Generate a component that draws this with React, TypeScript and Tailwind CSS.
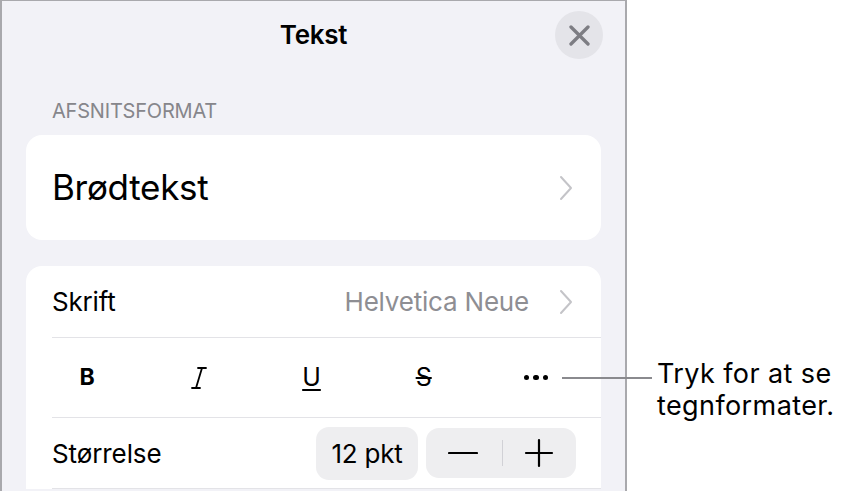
const font = { fontFamily: 'Inter, "Noto Sans", sans-serif' }

function Chevron() {
  return (
    <svg width="14" height="26" viewBox="0 0 14 26" fill="none" stroke="#c4c4c8" strokeWidth="2" strokeLinecap="round" strokeLinejoin="round">
      <polyline points="2,2 12,13 2,24" />
    </svg>
  )
}

function Line({ d }: { d: string }) {
  return (
    <svg width="30" height="30" viewBox="0 0 30 30" fill="none" stroke="black" strokeWidth="2.2" strokeLinecap="round">
      <path d={d} />
    </svg>
  )
}

function Sep() {
  return <div className="ml-[26px] h-px bg-[#e3e3e7]" />
}

export default function App() {
  return (
    <div className="relative flex h-[491px] w-[846px] overflow-hidden bg-white text-black" style={font}>
      <div className="flex h-[520px] w-[627px] flex-col border-l-2 border-r-2 border-t border-[#a9a9ad] bg-[#f2f2f7]">
        <header className="grid grid-cols-[1fr_auto_1fr] items-center py-[10px]">
          <div />
          <h1 className="text-[26px] font-semibold leading-[32px] tracking-[-0.3px]">Tekst</h1>
          <button className="mr-[22px] flex h-12 w-12 items-center justify-center justify-self-end rounded-full bg-[#e4e4e9]">
            <svg width="21" height="21" viewBox="0 0 21 21" fill="none" stroke="#7d7d83" strokeWidth="3.3" strokeLinecap="round">
              <path d="M2 2L19 19M19 2L2 19" />
            </svg>
          </button>
        </header>

        <div className="mt-[30px] px-[50px] text-[20px] leading-[24px] tracking-[-0.2px] text-[#86868b]">AFSNITSFORMAT</div>

        <div className="mx-[24px] mt-[12px] flex h-[105px] items-center justify-between rounded-[16px] bg-white pl-[26px] pr-[28px]">
          <span className="text-[35px] tracking-[-0.3px]">Brødtekst</span>
          <Chevron />
        </div>

        <div className="mx-[24px] mt-[26px] flex flex-col rounded-t-[16px] bg-white">
          <div className="flex h-[71px] items-center justify-between pl-[26px] pr-[28px]">
            <span className="text-[26px] tracking-[-0.2px]">Skrift</span>
            <div className="flex items-center gap-[30px]">
              <span className="text-[26px] tracking-[-0.2px] text-[#8e8e93]">Helvetica Neue</span>
              <Chevron />
            </div>
          </div>
          <Sep />
          <div className="grid h-[79px] grid-cols-5 items-center pl-[5px] pr-[9px]">
            <span className="text-center text-[23px] font-bold">B</span>
            <span className="flex justify-center">
              <svg width="16" height="24" viewBox="0 0 16 24" fill="none" stroke="black" strokeWidth="1.8" strokeLinecap="round">
                <line x1="7" y1="2" x2="15" y2="2" />
                <line x1="1" y1="22" x2="9" y2="22" />
                <line x1="11" y1="2" x2="5" y2="22" />
              </svg>
            </span>
            <span className="text-center text-[25px] underline decoration-[1.8px] underline-offset-[3px]">U</span>
            <span className="text-center text-[25px] line-through decoration-[1.8px]">S</span>
            <span className="flex justify-center gap-[4px]">
              <span className="h-[5.5px] w-[5.5px] rounded-full bg-black" />
              <span className="h-[5.5px] w-[5.5px] rounded-full bg-black" />
              <span className="h-[5.5px] w-[5.5px] rounded-full bg-black" />
            </span>
          </div>
          <Sep />
          <div className="flex h-[70px] items-center pl-[26px] pr-[25px]">
            <span className="text-[26px] tracking-[-0.1px]">Størrelse</span>
            <div className="ml-auto flex items-center gap-[8px]">
              <div className="flex h-[53px] w-[102px] items-center justify-center rounded-[13px] bg-[#eeeef0] text-[26px] tracking-[-0.2px]">12 pkt</div>
              <div className="flex h-[50px] w-[150px] items-center rounded-[13px] bg-[#eeeef0]">
                <div className="flex flex-1 items-center justify-center pr-[2px]">
                  <Line d="M1 15H29" />
                </div>
                <div className="h-[26px] w-px bg-[#d1d1d6]" />
                <div className="flex flex-1 items-center justify-center">
                  <Line d="M2 15H28M15 2V28" />
                </div>
              </div>
            </div>
          </div>
          <Sep />
        </div>
      </div>

      <div className="absolute left-[562px] top-[377px] h-[2px] w-[90px] bg-[#8a8a8e]" />
      <div className="absolute left-[657px] top-[358px] text-[27px] leading-[32px] tracking-[0.4px]">
        Tryk for at se
        <br />
        tegnformater.
      </div>
    </div>
  )
}
